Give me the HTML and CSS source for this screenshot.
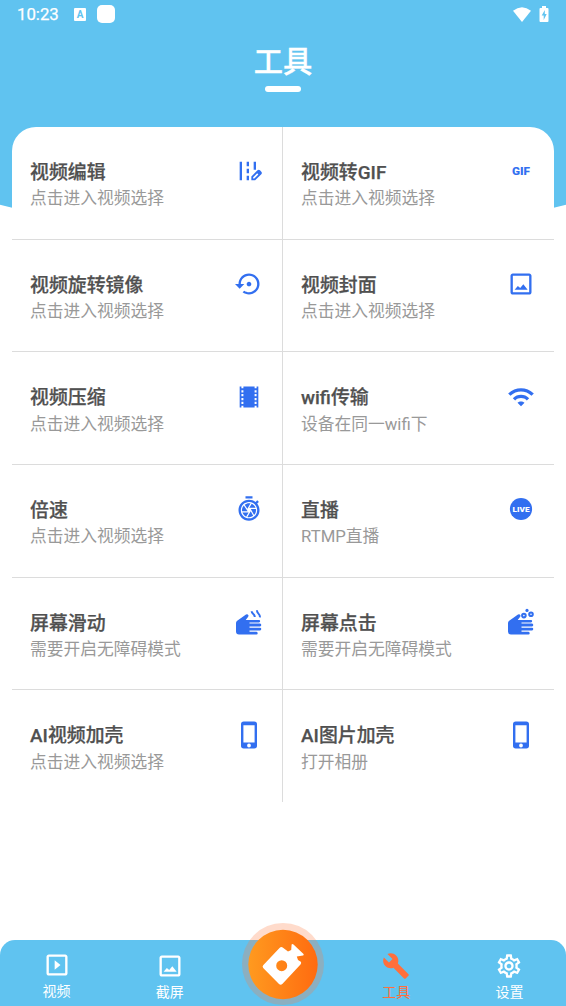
FILE: index.html
```html
<!DOCTYPE html>
<html lang="zh-CN">
<head>
<meta charset="utf-8">
<title>工具</title>
<link rel="stylesheet" href="styles.css">
</head>
<body>
<svg class="defs" width="0" height="0">
  <symbol id="hand" viewBox="0 0 28 28"><path d="M1 14Q1 12.500 2.200 11.700L11 5.600Q12.500 4.800 13.400 6.200Q13.800 7.200 13 8L10.700 10.900H24Q25.200 11 25.200 12.100T24 13.400H14.500V14.600H25Q26.300 14.700 26.300 16T25 17.400H14.500V18.700H25Q26.300 18.800 26.300 20T25 21.400H14.500V22.700H21.500Q22.700 22.800 22.700 24.200T21.500 25.600H4Q1 25.400 1 22.500Z"/></symbol>
  <symbol id="image" viewBox="0 0 24 24"><path d="M19 5v14H5V5h14m0-2H5c-1.1 0-2 .9-2 2v14c0 1.1.9 2 2 2h14c1.1 0 2-.9 2-2V5c0-1.1-.9-2-2-2z"/><path d="M6.5 17 9.3 13.7 11.3 15.4 14 12.2 17.7 17z"/></symbol>
  <symbol id="phone" viewBox="0 0 28 28"><path fill-rule="evenodd" d="M8.7.5H19.3Q22 .5 22 3.2V24.8Q22 27.5 19.3 27.5H8.7Q6 27.5 6 24.8V3.2Q6 .5 8.7 .5ZM8.4 4.3V21.4H19.6V4.3ZM14 22.6a1.9 1.9 0 1 0 0 3.8a1.9 1.9 0 1 0 0-3.8Z"/></symbol>
</svg>
<div class="screen">
  <header class="header">
    <div class="status">
      <span class="time">10:23</span>
      <svg class="status-a" viewBox="0 0 12 13"><rect width="12" height="13" rx="1" fill="#fff"/><text x="6" y="10" text-anchor="middle">A</text></svg>
      <span class="status-app"></span>
      <svg class="status-wifi" viewBox="0 0 18 15"><path fill="#fff" d="M9 15 0 3.8Q9-3.2 18 3.8Z"/></svg>
      <svg class="status-battery" viewBox="0 0 10 16"><path fill="#fff" d="M3 0h4v2h1.5Q9.5 2 9.5 3v12q0 1-1 1h-7q-1 0-1-1V3q0-1 1-1H3z"/><path fill="#60c3f0" d="M5.8 4 2.7 9.4h2V14l3-6H5.8z"/></svg>
    </div>
    <h1 class="title">工具</h1>
    <span class="underline"></span>
  </header>

  <main class="grid">
    <section class="cell"><div><h2>视频编辑</h2><p>点击进入视频选择</p></div>
      <svg class="icon" viewBox="0 0 24 24"><path d="M18 4h-2v7h2zM4 4h2v16H4zm6 0h2v4h-2zm0 6h2v4h-2zm0 6h2v4h-2zM22.56 12.59l-1.15-1.15c-.59-.59-1.54-.59-2.12 0L14 16.73V20h3.27l5.29-5.29c.59-.58.59-1.53 0-2.12zM16.58 18.45h-1.03v-1.03L19 13.97l1.03 1.03z"/></svg></section>
    <section class="cell"><div><h2>视频转GIF</h2><p>点击进入视频选择</p></div>
      <svg class="icon" viewBox="0 0 28 28"><text class="gif" x="5" y="17.7" textLength="18" lengthAdjust="spacingAndGlyphs">GIF</text></svg></section>
    <section class="cell"><div><h2>视频旋转镜像</h2><p>点击进入视频选择</p></div>
      <svg class="icon" viewBox="0 0 24 24"><path d="M14 12c0-1.1-.9-2-2-2s-2 .9-2 2 .9 2 2 2 2-.9 2-2zm-2-9c-4.97 0-9 4.03-9 9H0l4 4 4-4H5c0-3.87 3.13-7 7-7s7 3.13 7 7-3.13 7-7 7c-1.51 0-2.91-.49-4.06-1.3l-1.42 1.44C8.04 20.3 9.94 21 12 21c4.97 0 9-4.03 9-9s-4.03-9-9-9z"/></svg></section>
    <section class="cell"><div><h2>视频封面</h2><p>点击进入视频选择</p></div>
      <svg class="icon"><use href="#image"/></svg></section>
    <section class="cell"><div><h2>视频压缩</h2><p>点击进入视频选择</p></div>
      <svg class="icon" viewBox="0 0 24 24"><path fill-rule="evenodd" d="M20 3v18h-1.5v-1.5h-1.7V21H7.2v-1.5H5.5V21H4V3h1.5v1.5h1.7V3h9.6v1.5h1.7V3zM5.5 6.2v1.9h1.7V6.2zm0 3.3v1.9h1.7V9.5zm0 3.3v1.9h1.7v-1.9zm0 3.2v1.9h1.7V16zM16.8 6.2v1.9h1.7V6.2zm0 3.3v1.9h1.7V9.5zm0 3.3v1.9h1.7v-1.9zm0 3.2v1.9h1.7V16z"/></svg></section>
    <section class="cell"><div><h2>wifi传输</h2><p>设备在同一wifi下</p></div>
      <svg class="icon" viewBox="0 0 24 24"><path d="M1 9l2 2c4.97-4.97 13.03-4.97 18 0l2-2C16.93 2.93 7.08 2.93 1 9zm8 8l3 3 3-3c-1.65-1.66-4.34-1.66-6 0zm-4-4l2 2c2.76-2.76 7.24-2.76 10 0l2-2C15.14 9.14 8.87 9.14 5 13z"/></svg></section>
    <section class="cell"><div><h2>倍速</h2><p>点击进入视频选择</p></div>
      <svg class="icon" viewBox="0 0 24 24"><path d="M15 1H9v2h6V1zm4.03 6.39l1.42-1.42c-.43-.51-.9-.99-1.41-1.41l-1.42 1.42C16.07 4.74 14.12 4 12 4c-4.97 0-9 4.03-9 9s4.02 9 9 9c4.97 0 9-4.03 9-9 0-2.12-.74-4.07-1.97-5.61zM12 20c-3.87 0-7-3.13-7-7s3.13-7 7-7 7 3.13 7 7-3.13 7-7 7zm-.32-5H6.35c.57 1.62 1.82 2.92 3.41 3.56l-.11-.06 2.03-3.5zm5.97-4c-.57-1.6-1.78-2.89-3.34-3.54L12.26 11h5.39zm-7.04 7.83c.45.11.91.17 1.39.17 1.34 0 2.57-.45 3.57-1.19l-2.11-3.9-2.85 4.92zM7.55 8.99C6.59 10.05 6 11.46 6 13c0 .34.04.67.09 1h4.72L7.55 8.99zm8.79 8.14C17.37 16.06 18 14.6 18 13c0-.34-.04-.67-.09-1h-4.34l2.77 5.13zm-3.01-9.98C12.9 7.06 12.46 7 12 7c-1.4 0-2.69.49-3.71 1.29l2.32 3.56 2.72-4.7z"/></svg></section>
    <section class="cell"><div><h2>直播</h2><p>RTMP直播</p></div>
      <svg class="icon" viewBox="0 0 28 28"><circle cx="14" cy="14" r="11.1"/><text class="live" x="5.500" y="16.800" textLength="17" lengthAdjust="spacingAndGlyphs">LIVE</text></svg></section>
    <section class="cell"><div><h2>屏幕滑动</h2><p>需要开启无障碍模式</p></div>
      <svg class="icon icon-hand" viewBox="0 0 28 28"><use href="#hand"/><path class="line" d="M16.7 2.2C16.5 5 19.8 4.5 19.8 8M22 1.3C21.8 5 25.2 4.2 25 8.4"/></svg></section>
    <section class="cell"><div><h2>屏幕点击</h2><p>需要开启无障碍模式</p></div>
      <svg class="icon icon-hand" viewBox="0 0 28 28"><use href="#hand"/><circle cx="20" cy="1.4" r="1.6"/><circle class="line" cx="16.9" cy="6.6" r="1.8"/><circle class="line" cx="24" cy="5.2" r="1.8"/></svg></section>
    <section class="cell"><div><h2>AI视频加壳</h2><p>点击进入视频选择</p></div>
      <svg class="icon"><use href="#phone"/></svg></section>
    <section class="cell"><div><h2>AI图片加壳</h2><p>打开相册</p></div>
      <svg class="icon"><use href="#phone"/></svg></section>
  </main>

  <nav class="nav">
    <a class="tab tab-first"><svg viewBox="0 0 24 24"><path d="M19 5v14H5V5h14m0-2H5c-1.1 0-2 .9-2 2v14c0 1.1.9 2 2 2h14c1.1 0 2-.9 2-2V5c0-1.1-.9-2-2-2zM10 8v8l5-4z"/></svg><span>视频</span></a>
    <a class="tab"><svg><use href="#image"/></svg><span>截屏</span></a>
    <a class="tab record"><svg viewBox="0 0 82 82">
      <defs><linearGradient id="orange" x1="0" y1="0" x2="1" y2="0"><stop offset="0" stop-color="#ff9a1f"/><stop offset="1" stop-color="#ff6b10"/></linearGradient></defs>
      <circle cx="41" cy="41" r="41" fill="#ff7a40" fill-opacity=".27"/><circle cx="41" cy="41.5" r="34.7" fill="url(#orange)"/>
      <path fill="#fff" fill-rule="evenodd" d="M21.2 42.2 37.5 24.9Q39 23.5 40.7 24.4L46 28.5 49.200 27 49.600 21.500Q50.200 20.400 51.500 21.400L61.500 31Q62.200 32.200 61 32.500L54.800 33.400 56 37 58.800 38.800Q59.800 40 58.500 41.500L40.300 61Q38.700 62.500 37 61L21.200 45Q20 43.500 21.200 42.200ZM39.700 37.200a5.500 5.500 0 1 0 0 11a5.500 5.500 0 1 0 0-11Z"/></svg></a>
    <a class="tab active"><svg viewBox="0 0 24 24"><path d="M22.7 19l-9.1-9.1c.9-2.3.4-5-1.5-6.9-2-2-5-2.4-7.4-1.3L9 6 6 9 1.6 4.7C.4 7.1.9 10.1 2.9 12.1c1.9 1.9 4.6 2.4 6.9 1.5l9.1 9.1c.4.4 1 .4 1.4 0l2.3-2.3c.5-.4.5-1.1.1-1.4z"/></svg><span>工具</span></a>
    <a class="tab"><svg viewBox="0 0 24 24"><path d="M19.43 12.98c.04-.32.07-.64.07-.98 0-.34-.03-.66-.07-.98l2.11-1.65c.19-.15.24-.42.12-.64l-2-3.46c-.09-.16-.26-.25-.44-.25-.06 0-.12.01-.17.03l-2.49 1c-.52-.4-1.08-.73-1.69-.98l-.38-2.65C14.46 2.18 14.25 2 14 2h-4c-.25 0-.46.18-.49.42l-.38 2.65c-.61.25-1.17.59-1.69.98l-2.49-1c-.06-.02-.12-.03-.18-.03-.17 0-.34.09-.43.25l-2 3.46c-.13.22-.07.49.12.64l2.11 1.65c-.04.32-.07.65-.07.98 0 .33.03.66.07.98l-2.11 1.65c-.19.15-.24.42-.12.64l2 3.46c.09.16.26.25.44.25.06 0 .12-.01.17-.03l2.49-1c.52.4 1.08.73 1.69.98l.38 2.65c.03.24.24.42.49.42h4c.25 0 .46-.18.49-.42l.38-2.65c.61-.25 1.17-.59 1.69-.98l2.49 1c.06.02.12.03.18.03.17 0 .34-.09.43-.25l2-3.46c.12-.22.07-.49-.12-.64l-2.11-1.65zm-1.98-1.71c.04.31.05.52.05.73 0 .21-.02.43-.05.73l-.14 1.13.89.7 1.08.84-.7 1.21-1.27-.51-1.04-.42-.9.68c-.43.32-.84.56-1.25.73l-1.06.43-.16 1.13-.2 1.35h-1.4l-.19-1.35-.16-1.13-1.06-.43c-.43-.18-.83-.41-1.23-.71l-.91-.7-1.06.43-1.27.51-.7-1.21 1.08-.84.89-.7-.14-1.13c-.03-.31-.05-.54-.05-.74s.02-.43.05-.73l.14-1.13-.89-.7-1.08-.84.7-1.21 1.27.51 1.04.42.9-.68c.43-.32.84-.56 1.25-.73l1.06-.43.16-1.13.2-1.35h1.39l.19 1.35.16 1.13 1.06.43c.43.18.83.41 1.23.71l.91.7 1.06-.43 1.27-.51.7 1.21-1.07.85-.89.7.14 1.13zM12 8c-2.21 0-4 1.79-4 4s1.79 4 4 4 4-1.79 4-4-1.79-4-4-4zm0 6c-1.1 0-2-.9-2-2s.9-2 2-2 2 .9 2 2-.9 2-2 2z"/></svg><span>设置</span></a>
  </nav>
</div>
</body>
</html>
```
FILE: styles.css
```css
* { box-sizing: border-box; margin: 0; padding: 0; }
body { background: #fff; font-family: Roboto, "Noto Sans CJK SC", sans-serif; }
.defs { position: absolute; }
.screen { width: 566px; height: 1006px; display: flex; flex-direction: column; overflow: hidden; }
.header {
  height: 236px; flex: none; margin-bottom: -109px;
  display: flex; flex-direction: column; align-items: center;
  background: #60c3f0; clip-path: ellipse(570px 236px at 50% 0);
}
.status { width: 100%; height: 28px; flex: none; display: flex; align-items: center; padding: 0 17px; color: #fff; }
.time { width: 57px; font-size: 16.8px; line-height: 28px; -webkit-text-stroke: .25px #fff; }
.status-a { width: 12px; height: 13px; }
.status-a text { font: 700 10px Roboto, sans-serif; fill: #60c3f0; }
.status-app { width: 18px; height: 18px; border-radius: 5px; background: #fff; margin-left: 11px; }
.status-wifi { width: 18px; height: 15px; margin-left: auto; }
.status-battery { width: 10px; height: 16px; margin-left: 8px; }
.title { font-size: 29.3px; font-weight: 500; line-height: 40px; color: #fff; margin-top: 14px; -webkit-text-stroke: .3px #fff; }
.underline { width: 36px; height: 6px; border-radius: 3px; background: #fff; margin-top: 4px; }

.grid {
  flex: none; width: 542px; margin: 0 auto; position: relative;
  display: grid; grid-template-columns: 271px 271px; grid-template-rows: repeat(5, 112.7px) 111.5px;
  background: #fff; border-radius: 24px 24px 0 0;
}
.cell {
  display: flex; justify-content: space-between; align-items: flex-start;
  padding: 31px 19px 0 18px; border-bottom: 1px solid #dcdcdc;
}
.cell:nth-child(odd) { border-right: 1px solid #dcdcdc; }
.cell:nth-child(n+11) { border-bottom: 0; }
.cell h2 { font-size: 18.9px; font-weight: 500; line-height: 28px; padding-top: 1px; margin-bottom: -1px; color: #505050; white-space: nowrap; -webkit-text-stroke: .25px #505050; }
.cell p { font-size: 16.75px; line-height: 24px; padding-top: .2px; color: #999; white-space: nowrap; }
.icon { width: 28px; height: 28px; flex: none; margin-top: -.7px; fill: #326ff0; overflow: visible; }
.icon-hand { margin-top: .3px; }
.icon .line { fill: none; stroke: #326ff0; stroke-width: 2; }
.gif { font: 900 10px Roboto, sans-serif; }
.icon .live { font: 900 8px Roboto, sans-serif; fill: #fff; }

.nav {
  flex: none; height: 66px; margin-top: auto;
  display: grid; grid-template-columns: repeat(5, 1fr);
  background: #60c3f0; border-radius: 15px 15px 0 0;
}
.tab { display: flex; flex-direction: column; align-items: center; padding-top: 12px; color: #fff; font-size: 14px; line-height: 20px; }
.tab-first { padding-top: 11px; }
.tab svg { width: 28px; height: 28px; fill: currentColor; margin-bottom: 2px; }
.active { color: #ff6f3c; }
.record { padding: 0; margin-top: -17px; }
.tab.record svg { width: 82px; height: 82px; margin: 0; }
```
